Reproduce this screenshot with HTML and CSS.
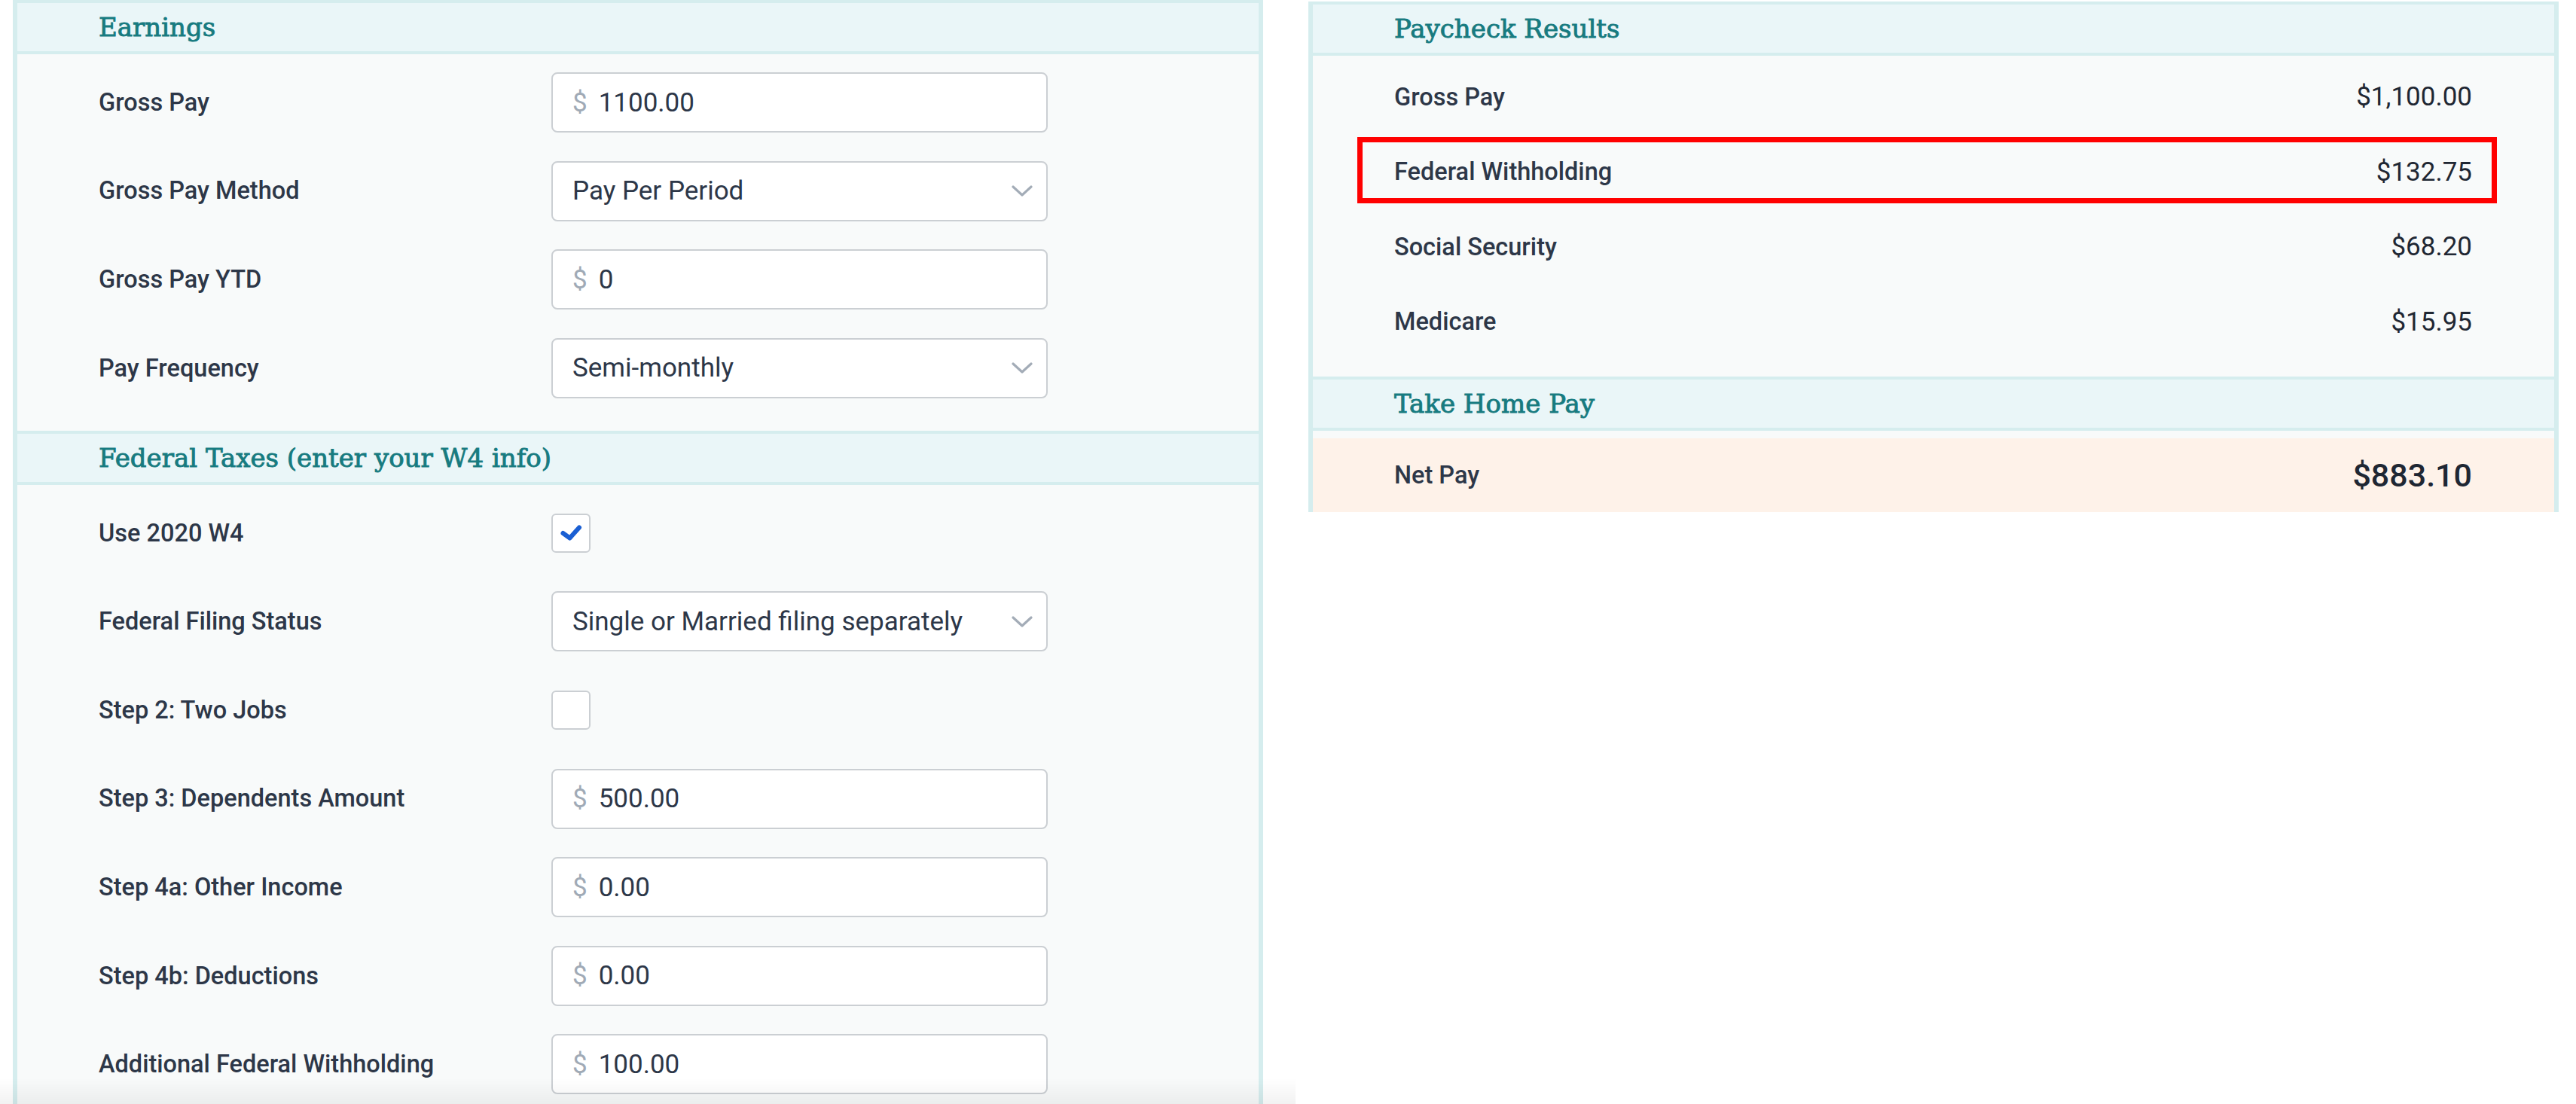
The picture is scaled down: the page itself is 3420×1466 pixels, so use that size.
FILE: index.html
```html
<!DOCTYPE html>
<html lang="en">
<head>
<meta charset="utf-8">
<title>Paycheck Calculator</title>
<link rel="stylesheet" href="styles.css">
</head>
<body>
<div class="page">
  <section class="panel panel-left">
    <div class="panel-head"><h2>Earnings</h2></div>
    <div class="form">
      <div class="field">
        <span class="label">Gross Pay</span>
        <div class="input"><span class="cur">$</span><span class="val">1100.00</span></div>
      </div>
      <div class="field">
        <span class="label">Gross Pay Method</span>
        <div class="input select"><span class="val">Pay Per Period</span>
          <svg class="chev" viewBox="0 0 28 15"><polyline points="2,2 14,13 26,2" /></svg></div>
      </div>
      <div class="field">
        <span class="label">Gross Pay YTD</span>
        <div class="input"><span class="cur">$</span><span class="val">0</span></div>
      </div>
      <div class="field">
        <span class="label">Pay Frequency</span>
        <div class="input select"><span class="val">Semi-monthly</span>
          <svg class="chev" viewBox="0 0 28 15"><polyline points="2,2 14,13 26,2" /></svg></div>
      </div>
    </div>
    <div class="panel-head"><h2>Federal Taxes (enter your W4 info)</h2></div>
    <div class="form form-last">
      <div class="field">
        <span class="label">Use 2020 W4</span>
        <div class="check"><svg class="tick" viewBox="0 0 48 48"><polyline points="13.5,24 22.5,30.5 35,16.5" /></svg></div>
      </div>
      <div class="field">
        <span class="label">Federal Filing Status</span>
        <div class="input select"><span class="val">Single or Married filing separately</span>
          <svg class="chev" viewBox="0 0 28 15"><polyline points="2,2 14,13 26,2" /></svg></div>
      </div>
      <div class="field">
        <span class="label">Step 2: Two Jobs</span>
        <div class="check"></div>
      </div>
      <div class="field">
        <span class="label">Step 3: Dependents Amount</span>
        <div class="input"><span class="cur">$</span><span class="val">500.00</span></div>
      </div>
      <div class="field">
        <span class="label">Step 4a: Other Income</span>
        <div class="input"><span class="cur">$</span><span class="val">0.00</span></div>
      </div>
      <div class="field">
        <span class="label">Step 4b: Deductions</span>
        <div class="input"><span class="cur">$</span><span class="val">0.00</span></div>
      </div>
      <div class="field">
        <span class="label">Additional Federal Withholding</span>
        <div class="input"><span class="cur">$</span><span class="val">100.00</span></div>
      </div>
    </div>
  </section>

  <section class="panel panel-right">
    <div class="panel-head"><h2>Paycheck Results</h2></div>
    <div class="results">
      <div class="res-row"><span class="label">Gross Pay</span><span class="res-val">$1,100.00</span></div>
      <div class="res-row"><span class="label">Federal Withholding</span><span class="res-val">$132.75</span><div class="highlight"></div></div>
      <div class="res-row"><span class="label">Social Security</span><span class="res-val">$68.20</span></div>
      <div class="res-row"><span class="label">Medicare</span><span class="res-val">$15.95</span></div>
    </div>
    <div class="panel-head"><h2>Take Home Pay</h2></div>
    <div class="net-body">
      <div class="net-row"><span class="label">Net Pay</span><span class="net-val">$883.10</span></div>
    </div>
  </section>
</div>
<div class="fade"></div>
</body>
</html>
```
FILE: styles.css
```css
html, body {
  margin: 0;
  padding: 0;
  overflow: hidden;
  background: #ffffff;
}
body {
  font-family: Roboto, "Noto Sans", "Liberation Sans", sans-serif;
  color: #2d3748;
}
.page {
  display: flex;
  align-items: flex-start;
  gap: 60px;
  padding-left: 17px;
}
.panel {
  width: 1648px;
  border-left: 6px solid #d5edee;
  border-right: 6px solid #d5edee;
  background: #f8fafa;
}
.panel-left {
  min-height: 1520px;
}
.panel-right {
  margin-top: 2px;
}
.panel-head {
  height: 64px;
  border-top: 4px solid #d5edee;
  border-bottom: 4px solid #d5edee;
  background: #eaf6f8;
  display: flex;
  align-items: center;
  padding-left: 108px;
}
.panel-head h2 {
  margin: 0;
  font-family: "DejaVu Serif", "Liberation Serif", serif;
  font-weight: 400;
  font-size: 34px;
  line-height: 1;
  color: #177b80;
  -webkit-text-stroke: 0.9px #177b80;
}
.form {
  display: flex;
  flex-direction: column;
  gap: 37.6px;
  padding: 24px 0 43px 108px;
}
.form-last {
  padding-bottom: 60px;
}
.field {
  display: grid;
  grid-template-columns: 601px 659px;
  align-items: center;
  height: 80px;
}
.label {
  font-size: 32.5px;
  font-weight: 500;
  color: #2d3748;
  line-height: 1;
}
.input {
  box-sizing: border-box;
  height: 80px;
  border: 2px solid #cbcfd3;
  border-radius: 8px;
  background: #ffffff;
  display: flex;
  align-items: center;
  padding: 0 18px 0 26px;
  font-size: 35px;
  line-height: 1;
  color: #2d3748;
}
.cur {
  color: #a0aab6;
  margin-right: 15px;
}
.select {
  justify-content: space-between;
}
.chev {
  width: 28px;
  height: 15px;
  flex: none;
}
.chev polyline {
  fill: none;
  stroke: #a3acb7;
  stroke-width: 3.2;
  stroke-linecap: round;
  stroke-linejoin: round;
}
.check {
  box-sizing: border-box;
  width: 52px;
  height: 52px;
  border: 2px solid #cbcfd3;
  border-radius: 6px;
  background: #ffffff;
  display: flex;
  align-items: center;
  justify-content: center;
}
.tick {
  width: 48px;
  height: 48px;
}
.tick polyline {
  fill: none;
  stroke: #1a5fd3;
  stroke-width: 6;
  stroke-linecap: round;
  stroke-linejoin: round;
}
.results {
  padding: 5px 109px 23px 108px;
}
.res-row {
  position: relative;
  height: 99.5px;
  display: flex;
  align-items: center;
  justify-content: space-between;
}
.res-val {
  font-size: 35px;
  line-height: 1;
  color: #1f2733;
}
.highlight {
  position: absolute;
  left: -49px;
  right: -33px;
  top: 3px;
  bottom: 8px;
  border: 7px solid #ff0000;
}
.net-body {
  padding-top: 10px;
}
.net-row {
  height: 98px;
  background: #fef2e9;
  display: flex;
  align-items: center;
  justify-content: space-between;
  padding: 0 109px 0 108px;
}
.net-val {
  font-size: 43px;
  font-weight: 500;
  line-height: 1;
  color: #1f2733;
}
.fade {
  position: fixed;
  left: 0;
  bottom: 0;
  width: 1720px;
  height: 34px;
  background: linear-gradient(rgba(0, 0, 0, 0), rgba(0, 0, 0, 0.05));
  pointer-events: none;
}
```
